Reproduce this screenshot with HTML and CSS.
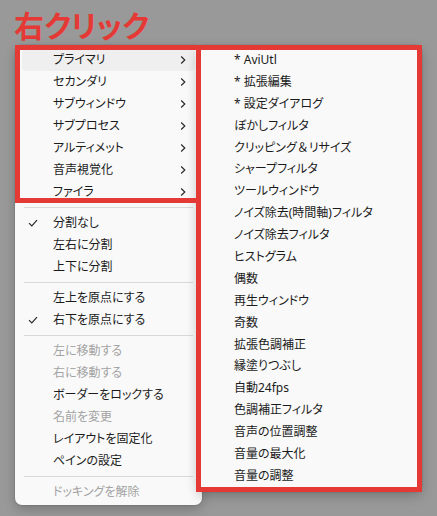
FILE: index.html
```html
<!DOCTYPE html>
<html lang="ja">
<head>
<meta charset="utf-8">
<title>右クリック</title>
<link rel="stylesheet" href="styles.css">
</head>
<body>
<div class="page">
  <h1 class="title">右クリック</h1>
  <div class="stage">
    <div class="menu main">
      <div class="item hover"><span class="icon"></span><span class="label">プライマリ</span><svg class="arrow" width="6" height="10" viewBox="0 0 6 10"><polyline points="1.2,1.5 4.8,5 1.2,8.5"/></svg></div>
      <div class="item"><span class="icon"></span><span class="label">セカンダリ</span><svg class="arrow" width="6" height="10" viewBox="0 0 6 10"><polyline points="1.2,1.5 4.8,5 1.2,8.5"/></svg></div>
      <div class="item"><span class="icon"></span><span class="label">サブウィンドウ</span><svg class="arrow" width="6" height="10" viewBox="0 0 6 10"><polyline points="1.2,1.5 4.8,5 1.2,8.5"/></svg></div>
      <div class="item"><span class="icon"></span><span class="label">サブプロセス</span><svg class="arrow" width="6" height="10" viewBox="0 0 6 10"><polyline points="1.2,1.5 4.8,5 1.2,8.5"/></svg></div>
      <div class="item"><span class="icon"></span><span class="label">アルティメット</span><svg class="arrow" width="6" height="10" viewBox="0 0 6 10"><polyline points="1.2,1.5 4.8,5 1.2,8.5"/></svg></div>
      <div class="item"><span class="icon"></span><span class="label">音声視覚化</span><svg class="arrow" width="6" height="10" viewBox="0 0 6 10"><polyline points="1.2,1.5 4.8,5 1.2,8.5"/></svg></div>
      <div class="item"><span class="icon"></span><span class="label">ファイラ</span><svg class="arrow" width="6" height="10" viewBox="0 0 6 10"><polyline points="1.2,1.5 4.8,5 1.2,8.5"/></svg></div>
      <div class="sep"></div>
      <div class="item"><span class="icon"><svg width="10" height="10" viewBox="0 0 10 10"><polyline points="1,5.2 3.8,8 9,2.2"/></svg></span><span class="label">分割なし</span></div>
      <div class="item"><span class="icon"></span><span class="label">左右に分割</span></div>
      <div class="item"><span class="icon"></span><span class="label">上下に分割</span></div>
      <div class="sep"></div>
      <div class="item"><span class="icon"></span><span class="label">左上を原点にする</span></div>
      <div class="item"><span class="icon"><svg width="10" height="10" viewBox="0 0 10 10"><polyline points="1,5.2 3.8,8 9,2.2"/></svg></span><span class="label">右下を原点にする</span></div>
      <div class="sep"></div>
      <div class="item disabled"><span class="icon"></span><span class="label">左に移動する</span></div>
      <div class="item disabled"><span class="icon"></span><span class="label">右に移動する</span></div>
      <div class="item"><span class="icon"></span><span class="label">ボーダーをロックする</span></div>
      <div class="item disabled"><span class="icon"></span><span class="label">名前を変更</span></div>
      <div class="item"><span class="icon"></span><span class="label">レイアウトを固定化</span></div>
      <div class="item"><span class="icon"></span><span class="label">ペインの設定</span></div>
      <div class="sep"></div>
      <div class="item disabled"><span class="icon"></span><span class="label">ドッキングを解除</span></div>
    </div>
    <div class="menu sub">
      <div class="item"><span class="label">* AviUtl</span></div>
      <div class="item"><span class="label">* 拡張編集</span></div>
      <div class="item"><span class="label">* 設定ダイアログ</span></div>
      <div class="item"><span class="label">ぼかしフィルタ</span></div>
      <div class="item"><span class="label">クリッピング<span class="fw">＆</span>リサイズ</span></div>
      <div class="item"><span class="label">シャープフィルタ</span></div>
      <div class="item"><span class="label">ツールウィンドウ</span></div>
      <div class="item"><span class="label">ノイズ除去(時間軸)フィルタ</span></div>
      <div class="item"><span class="label">ノイズ除去フィルタ</span></div>
      <div class="item"><span class="label">ヒストグラム</span></div>
      <div class="item"><span class="label">偶数</span></div>
      <div class="item"><span class="label">再生ウィンドウ</span></div>
      <div class="item"><span class="label">奇数</span></div>
      <div class="item"><span class="label">拡張色調補正</span></div>
      <div class="item"><span class="label">縁塗りつぶし</span></div>
      <div class="item"><span class="label">自動24fps</span></div>
      <div class="item"><span class="label">色調補正フィルタ</span></div>
      <div class="item"><span class="label">音声の位置調整</span></div>
      <div class="item"><span class="label">音量の最大化</span></div>
      <div class="item"><span class="label">音量の調整</span></div>
    </div>
    <div class="mark mark-main"></div>
    <div class="mark mark-sub"></div>
  </div>
</div>
</body>
</html>
```

FILE: styles.css
```css
html, body {
  margin: 0;
  padding: 0;
  background: #999999;
}

body {
  width: 437px;
  height: 516px;
  overflow: hidden;
  font-family: "Noto Sans", "Noto Sans CJK JP", sans-serif;
  font-feature-settings: "palt";
}

.page {
  display: flex;
  flex-direction: column;
}

.title {
  margin: 0;
  height: 45px;
  box-sizing: border-box;
  padding: 7px 0 0 14px;
  font-family: "Noto Sans CJK JP", sans-serif;
  font-weight: 700;
  font-size: 30px;
  line-height: 34px;
  color: #e53935;
  letter-spacing: 0;
}

.stage {
  position: relative;
  display: flex;
  align-items: flex-start;
  padding-left: 15px;
}

.menu {
  background: #f9f9f9;
  border-radius: 7px;
  box-shadow: 0 0 0 1px rgba(0, 0, 0, 0.07), 0 4px 12px rgba(0, 0, 0, 0.22);
  font-size: 12px;
  color: #1b1b1b;
  display: flex;
  flex-direction: column;
}

.main {
  width: 187px;
  padding: 4px 0 2px;
}

.sub {
  width: 225px;
  margin-left: -5px;
  padding: 4px 0 5px;
}

.item {
  display: flex;
  align-items: center;
  height: 22px;
  margin: 0 7px;
  border-radius: 4px;
  white-space: nowrap;
}

.sub .item {
  height: 21.9px;
  padding-left: 30px;
}

.item.hover {
  background: #efefef;
}

.item.disabled {
  color: #a3a3a3;
}

.icon {
  width: 31px;
  flex: none;
  display: flex;
  align-items: center;
  padding-left: 6px;
  box-sizing: border-box;
}

.icon svg polyline {
  fill: none;
  stroke: #2a2a2a;
  stroke-width: 1.2;
}

.label {
  flex: 1;
  line-height: 22px;
}

.fw {
  font-feature-settings: normal;
  font-family: "Noto Sans CJK JP", sans-serif;
}

.arrow {
  margin-right: 9px;
  flex: none;
}

.arrow polyline {
  fill: none;
  stroke: #2a2a2a;
  stroke-width: 1.2;
}

.sep {
  height: 9px;
  display: flex;
  align-items: center;
  margin: 0 9px;
}

.sep::before {
  content: "";
  flex: 1;
  height: 1px;
  background: #d9d9d9;
}

.mark {
  position: absolute;
  top: 0;
  border: 5px solid #e53935;
  box-sizing: border-box;
  pointer-events: none;
}

.mark-main {
  left: 15px;
  width: 186px;
  height: 158px;
}

.mark-sub {
  left: 196px;
  width: 226px;
  height: 447px;
}
```
